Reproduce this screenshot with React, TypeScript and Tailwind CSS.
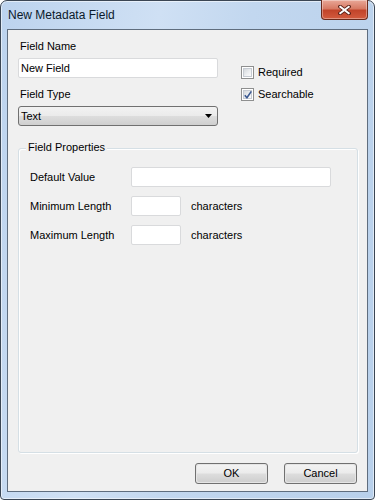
import React from "react";

const font = { fontFamily: '"Liberation Sans", Arial, sans-serif' };

function Checkbox({ checked }: { checked?: boolean }) {
  return (
    <div className="relative w-[13px] h-[13px] border border-[#8e8f8f] bg-white p-[1px]">
      <div className="w-full h-full border border-[#c6cbd2] bg-[linear-gradient(135deg,#d4d8dc_0%,#eef0f2_60%,#fbfbfb_100%)]" />
      {checked && (
        <svg className="absolute left-[1px] top-[1px]" width="10" height="10" viewBox="0 0 10 10">
          <path d="M1.8 5.2 L3.9 7.8 L8.3 1.4" fill="none" stroke="#3c5a92" strokeWidth="1.6" strokeLinejoin="round" />
        </svg>
      )}
    </div>
  );
}

function WinButton({ children }: { children: React.ReactNode }) {
  return (
    <div className="w-[73px] h-[21px] rounded-[3px] border border-[#707070] p-[1px] bg-[#e5e5e5]">
      <div className="w-full h-full rounded-[2px] bg-[linear-gradient(#f2f2f2_0%,#ebebeb_48%,#dddddd_52%,#cfcfcf_100%)] flex items-center justify-center text-[11px] leading-[13px] text-black">
        {children}
      </div>
    </div>
  );
}

export default function App() {
  return (
    <div style={font} className="w-[375px] h-[500px] bg-white">
      <div className="w-[375px] h-[500px] rounded-t-[7px] rounded-b-[4px] border border-[#3b4654] flex flex-col bg-[linear-gradient(100deg,#bcd3ee_0%,#cfe0f4_35%,#c2d7ef_55%,#b8d0eb_100%)] shadow-[inset_0_0_0_1px_rgba(255,255,255,0.55)]">
        <div className="h-[28px] flex justify-between shrink-0">
          <div className="pl-[7px] pt-[7px] text-[12px] leading-[14px] text-[#0b1a2c]">New Metadata Field</div>
          <div className="mr-[6px] -mt-[1px] w-[47px] h-[20px] rounded-b-[4px] border border-[#6a2a1c] border-t-0 bg-[linear-gradient(#e9a898_0%,#d77a64_45%,#c2442a_55%,#d35b3e_100%)] shadow-[inset_0_0_0_1px_rgba(255,255,255,0.35)] flex items-center justify-center">
            <svg width="13" height="10" viewBox="0 0 13 10">
              <path d="M2 1.5 L11 8.5 M11 1.5 L2 8.5" stroke="#5a2218" strokeWidth="3.6" strokeLinecap="square" />
              <path d="M2.3 1.8 L10.7 8.2 M10.7 1.8 L2.3 8.2" stroke="#ffffff" strokeWidth="2" strokeLinecap="square" />
            </svg>
          </div>
        </div>
        <div className="flex-1 mx-[6px] mb-[7px] border border-[#5f6d7e] bg-[#f0f0f0] flex flex-col text-[11px] leading-[13px] text-black">
          <div className="flex pt-[10px] pl-[10px]">
            <div className="w-[200px] flex flex-col">
              <div className="pl-[2px]">Field Name</div>
              <div className="mt-[5px] h-[20px] border border-[#d9dadc] rounded-[2px] bg-white pl-[2px] flex items-center">New Field</div>
              <div className="mt-[10px] pl-[2px]">Field Type</div>
              <div className="mt-[5px] h-[20px] rounded-[3px] border border-[#707070] bg-[linear-gradient(#f2f2f2_0%,#ebebeb_48%,#dddddd_52%,#cfcfcf_100%)] pl-[2px] pr-[5px] flex items-center justify-between">
                <span>Text</span>
                <svg width="7" height="4" viewBox="0 0 7 4">
                  <path d="M0 0 H7 L3.5 4 Z" fill="#000" />
                </svg>
              </div>
            </div>
            <div className="ml-[23px] pt-[26px] flex flex-col gap-[9px]">
              <div className="flex items-center gap-[4px]">
                <Checkbox />
                <span>Required</span>
              </div>
              <div className="flex items-center gap-[4px]">
                <Checkbox checked />
                <span>Searchable</span>
              </div>
            </div>
          </div>
          <div className="relative ml-[10px] mt-[22px] w-[340px] h-[305px] rounded-[3px] border border-[#d5dfe5] shadow-[inset_1px_1px_0_#ffffff,1px_1px_0_#ffffff] pt-[18px] pl-[11px] flex flex-col gap-[9px]">
            <div className="absolute left-[7px] -top-[8px] px-[2px] bg-[#f0f0f0]">Field Properties</div>
            <div className="flex items-center h-[20px]">
              <div className="w-[101px]">Default Value</div>
              <div className="w-[200px] h-[20px] border border-[#d9dadc] rounded-[2px] bg-white" />
            </div>
            <div className="flex items-center h-[20px]">
              <div className="w-[101px]">Minimum Length</div>
              <div className="w-[50px] h-[20px] border border-[#d9dadc] rounded-[2px] bg-white" />
              <div className="ml-[10px]">characters</div>
            </div>
            <div className="flex items-center h-[20px]">
              <div className="w-[101px]">Maximum Length</div>
              <div className="w-[50px] h-[20px] border border-[#d9dadc] rounded-[2px] bg-white" />
              <div className="ml-[10px]">characters</div>
            </div>
          </div>
          <div className="mt-[10px] mr-[10px] flex justify-end gap-[16px]">
            <WinButton>OK</WinButton>
            <WinButton>Cancel</WinButton>
          </div>
        </div>
      </div>
    </div>
  );
}
